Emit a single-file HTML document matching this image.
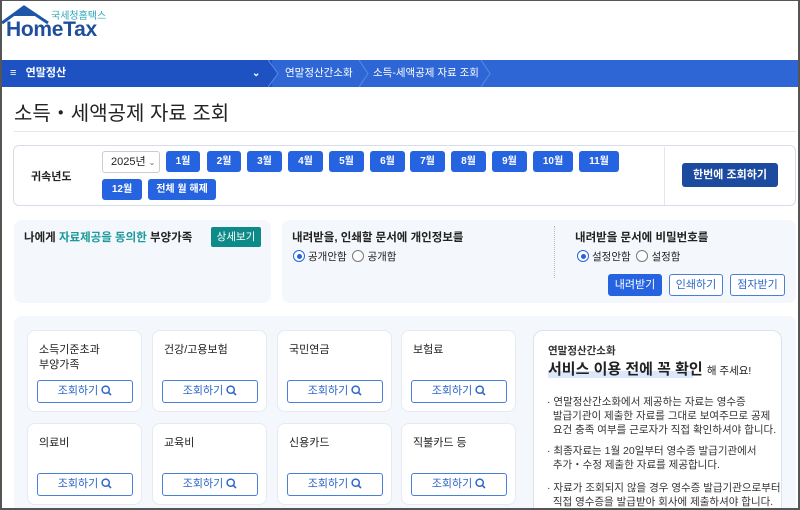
<!DOCTYPE html>
<html><head><meta charset="utf-8"><style>
*{box-sizing:border-box;margin:0;padding:0}
html,body{width:800px;height:510px;overflow:hidden}
body{background:#fff;font-family:"Liberation Sans","Noto Sans CJK KR",sans-serif;color:#222;position:relative}
.frame{position:absolute;left:0;top:0;width:800px;height:510px;border:2px solid #555;border-top-width:1px;z-index:50;pointer-events:none}
.a{position:absolute}
.nav{left:0;top:60px;width:800px;height:27px;background:#2f66d6}
.navl{left:0;top:60px;width:272px;height:27px;background:#1e52c2;color:#fff;font-size:11px;font-weight:bold;line-height:27px;padding-left:10px}
.crumb{top:60px;height:27px;line-height:27px;color:#fff;font-size:10.5px}
.mb{position:absolute;height:21px;background:#2563e0;color:#fff;font-size:10px;font-weight:bold;text-align:center;line-height:21px;border-radius:3px}
.panel{background:#f4f7fb;border-radius:8px}
.card{position:absolute;width:115px;height:82px;background:#fff;border-radius:8px;border:1px solid #e6ebf2}
.card .t{position:absolute;left:11px;top:12px;font-size:11px;line-height:15px;color:#222}
.card .b{position:absolute;left:9px;top:49px;width:96px;height:23px;border:1px solid #4a7fd6;border-radius:3px;color:#2f66c8;font-size:11px;text-align:center;line-height:21px}
.card .b svg{vertical-align:-2px;margin-left:3px}
.radio{display:inline-block;width:12px;height:12px;border:1px solid #777;border-radius:50%;vertical-align:-2px;margin-right:3px;background:#fff;position:relative}
.radio.on{border-color:#2563e0}
.radio.on:after{content:"";position:absolute;left:2.5px;top:2.5px;width:5px;height:5px;border-radius:50%;background:#2563e0}
.ob{position:absolute;height:22px;border:1px solid #4a7fd6;border-radius:3px;color:#2f66c8;font-size:11px;text-align:center;line-height:20px;background:#fff}
.info{font-size:10.5px;color:#333;line-height:14px}
</style></head><body>
<div class="frame"></div>
<svg class="a" style="left:1px;top:5px" width="50" height="20" viewBox="0 0 50 20"><path d="M1 18 L23 2 L47 18" fill="none" stroke="#1f57a8" stroke-width="3"/><path d="M12 11 L23 3 L36 11 Z" fill="#1f57a8"/></svg>
<div class="a" style="left:51px;top:7px;font-size:10px;color:#2aa6b8">국세청홈택스</div>
<div class="a" style="left:6px;top:19px;font-size:21px;line-height:22px;font-weight:bold;color:#1f4f9c;letter-spacing:-0.3px">HomeTax</div>
<div class="a nav"></div>
<div class="a navl">≡ &nbsp;&nbsp;연말정산<span style="position:absolute;left:252px;font-size:10px">⌄</span></div>
<svg class="a" style="left:268px;top:60px" width="12" height="27"><path d="M0 0 L10 13.5 L0 27" fill="#1e52c2" stroke="#5a8ae6" stroke-width="1"/></svg>
<div class="a crumb" style="left:285px">연말정산간소화</div>
<svg class="a" style="left:358px;top:60px" width="12" height="27"><path d="M1 0 L10 13.5 L1 27" fill="none" stroke="#5a8ae6" stroke-width="1"/></svg>
<div class="a crumb" style="left:373px">소득-세액공제 자료 조회</div>
<svg class="a" style="left:480px;top:60px" width="12" height="27"><path d="M1 0 L10 13.5 L1 27" fill="none" stroke="#5a8ae6" stroke-width="1"/></svg>
<div class="a" style="left:14px;top:97px;font-size:20px;color:#222">소득・세액공제 자료 조회</div>
<div class="a" style="left:14px;top:131px;width:782px;height:1px;background:#e3e6ea"></div>

<div class="a" style="left:13px;top:145px;width:783px;height:61px;border:1px solid #d6dde8;border-radius:6px;background:#fff"></div>
<div class="a" style="left:31px;top:168px;font-size:11px;font-weight:bold">귀속년도</div>
<div class="a" style="left:102px;top:151px;width:58px;height:22px;border:1px solid #ccc;border-radius:3px;font-size:11px;line-height:20px;padding-left:8px">2025년 <span style="font-size:8px;color:#666">⌄</span></div>
<div class="mb" style="left:166px;top:151px;width:34px">1월</div>
<div class="mb" style="left:207px;top:151px;width:34px">2월</div>
<div class="mb" style="left:247px;top:151px;width:35px">3월</div>
<div class="mb" style="left:288px;top:151px;width:35px">4월</div>
<div class="mb" style="left:329px;top:151px;width:35px">5월</div>
<div class="mb" style="left:370px;top:151px;width:35px">6월</div>
<div class="mb" style="left:410px;top:151px;width:35px">7월</div>
<div class="mb" style="left:451px;top:151px;width:35px">8월</div>
<div class="mb" style="left:492px;top:151px;width:35px">9월</div>
<div class="mb" style="left:533px;top:151px;width:40px">10월</div>
<div class="mb" style="left:579px;top:151px;width:40px">11월</div>
<div class="mb" style="left:102px;top:179px;width:40px">12월</div>
<div class="mb" style="left:148px;top:179px;width:68px">전체 월 해제</div>
<div class="a" style="left:664px;top:147px;width:1px;height:58px;background:#e3e6ea"></div>
<div class="mb" style="left:682px;top:163px;width:96px;height:24px;line-height:24px;background:#1b4a9e;font-size:11px">한번에 조회하기</div>

<div class="a panel" style="left:14px;top:220px;width:257px;height:83px"></div>
<div class="a" style="left:24px;top:229px;font-size:11.5px;font-weight:bold">나에게 <span style="color:#1a9a9a">자료제공을 동의한</span> 부양가족</div>
<div class="a" style="left:211px;top:227px;width:50px;height:20px;background:#0e8a88;color:#fff;font-size:10.5px;text-align:center;line-height:20px;border-radius:2px">상세보기</div>
<div class="a panel" style="left:282px;top:220px;width:514px;height:83px"></div>
<div class="a" style="left:292px;top:229px;font-size:11.5px;font-weight:bold">내려받을, 인쇄할 문서에 개인정보를</div>
<div class="a" style="left:293px;top:249px;font-size:10.5px"><span class="radio on"></span>공개안함 &nbsp;<span class="radio"></span>공개함</div>
<div class="a" style="left:554px;top:226px;width:0;height:52px;border-left:1px dotted #bbb"></div>
<div class="a" style="left:575px;top:229px;font-size:11.5px;font-weight:bold">내려받을 문서에 비밀번호를</div>
<div class="a" style="left:577px;top:249px;font-size:10.5px"><span class="radio on"></span>설정안함 &nbsp;<span class="radio"></span>설정함</div>
<div class="ob" style="left:608px;top:274px;width:54px;background:#2563e0;border-color:#2563e0;color:#fff">내려받기</div>
<div class="ob" style="left:669px;top:274px;width:54px">인쇄하기</div>
<div class="ob" style="left:730px;top:274px;width:55px">점자받기</div>

<div class="a panel" style="left:14px;top:316px;width:782px;height:194px;border-radius:8px 8px 0 0"></div>
<div class="card" style="left:27px;top:330px"><div class="t">소득기준초과<br>부양가족</div><div class="b">조회하기<svg width="11" height="11" viewBox="0 0 11 11"><circle cx="4.7" cy="4.7" r="3.6" fill="none" stroke="#2f66c8" stroke-width="1.5"/><path d="M7.3 7.3 L10 10" stroke="#2f66c8" stroke-width="1.6"/></svg></div></div>
<div class="card" style="left:152px;top:330px"><div class="t">건강/고용보험</div><div class="b">조회하기<svg width="11" height="11" viewBox="0 0 11 11"><circle cx="4.7" cy="4.7" r="3.6" fill="none" stroke="#2f66c8" stroke-width="1.5"/><path d="M7.3 7.3 L10 10" stroke="#2f66c8" stroke-width="1.6"/></svg></div></div>
<div class="card" style="left:277px;top:330px"><div class="t">국민연금</div><div class="b">조회하기<svg width="11" height="11" viewBox="0 0 11 11"><circle cx="4.7" cy="4.7" r="3.6" fill="none" stroke="#2f66c8" stroke-width="1.5"/><path d="M7.3 7.3 L10 10" stroke="#2f66c8" stroke-width="1.6"/></svg></div></div>
<div class="card" style="left:401px;top:330px"><div class="t">보험료</div><div class="b">조회하기<svg width="11" height="11" viewBox="0 0 11 11"><circle cx="4.7" cy="4.7" r="3.6" fill="none" stroke="#2f66c8" stroke-width="1.5"/><path d="M7.3 7.3 L10 10" stroke="#2f66c8" stroke-width="1.6"/></svg></div></div>
<div class="card" style="left:27px;top:423px"><div class="t">의료비</div><div class="b">조회하기<svg width="11" height="11" viewBox="0 0 11 11"><circle cx="4.7" cy="4.7" r="3.6" fill="none" stroke="#2f66c8" stroke-width="1.5"/><path d="M7.3 7.3 L10 10" stroke="#2f66c8" stroke-width="1.6"/></svg></div></div>
<div class="card" style="left:152px;top:423px"><div class="t">교육비</div><div class="b">조회하기<svg width="11" height="11" viewBox="0 0 11 11"><circle cx="4.7" cy="4.7" r="3.6" fill="none" stroke="#2f66c8" stroke-width="1.5"/><path d="M7.3 7.3 L10 10" stroke="#2f66c8" stroke-width="1.6"/></svg></div></div>
<div class="card" style="left:277px;top:423px"><div class="t">신용카드</div><div class="b">조회하기<svg width="11" height="11" viewBox="0 0 11 11"><circle cx="4.7" cy="4.7" r="3.6" fill="none" stroke="#2f66c8" stroke-width="1.5"/><path d="M7.3 7.3 L10 10" stroke="#2f66c8" stroke-width="1.6"/></svg></div></div>
<div class="card" style="left:401px;top:423px"><div class="t">직불카드 등</div><div class="b">조회하기<svg width="11" height="11" viewBox="0 0 11 11"><circle cx="4.7" cy="4.7" r="3.6" fill="none" stroke="#2f66c8" stroke-width="1.5"/><path d="M7.3 7.3 L10 10" stroke="#2f66c8" stroke-width="1.6"/></svg></div></div>

<div class="a" style="left:533px;top:330px;width:249px;height:190px;background:#fff;border:1px solid #dde3ec;border-radius:10px"></div>
<div class="a" style="left:548px;top:343px;font-size:10.5px;font-weight:bold;color:#333">연말정산간소화</div>
<div class="a" style="left:548px;top:371px;width:145px;height:7px;background:#dbe8fb"></div>
<div class="a" style="left:548px;top:358px;font-size:15px;font-weight:bold;color:#222">서비스 이용 전에 꼭 확인 <span style="font-size:10.5px;font-weight:normal">해 주세요!</span></div>
<div class="a info" style="left:547px;top:395px">· 연말정산간소화에서 제공하는 자료는 영수증<br>&nbsp;&nbsp;발급기관이 제출한 자료를 그대로 보여주므로 공제<br>&nbsp;&nbsp;요건 충족 여부를 근로자가 직접 확인하셔야 합니다.</div>
<div class="a info" style="left:547px;top:444px">· 최종자료는 1월 20일부터 영수증 발급기관에서<br>&nbsp;&nbsp;추가・수정 제출한 자료를 제공합니다.</div>
<div class="a info" style="left:547px;top:481px">· 자료가 조회되지 않을 경우 영수증 발급기관으로부터<br>&nbsp;&nbsp;직접 영수증을 발급받아 회사에 제출하셔야 합니다.</div>
</body></html>
